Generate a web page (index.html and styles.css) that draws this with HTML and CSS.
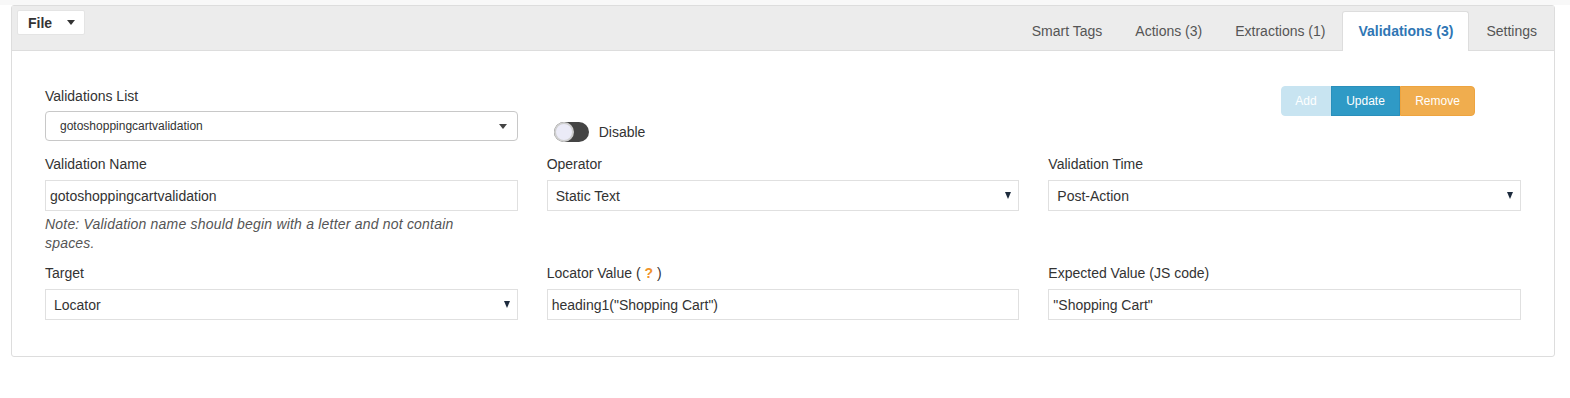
FILE: index.html
```html
<!DOCTYPE html>
<html>
<head>
    <title>Validations</title>
    <link rel="stylesheet" href="styles.css">
</head>
<body>
    <div class="top-strip"></div>
    <div class="panel">
        <div class="panel-head">
            <button class="file-btn">File <span class="caret"></span></button>
            <ul class="tabs">
                <li>Smart Tags</li>
                <li>Actions (3)</li>
                <li>Extractions (1)</li>
                <li class="active">Validations (3)</li>
                <li>Settings</li>
            </ul>
        </div>
        <div class="panel-body">
            <!-- list, toggle and buttons -->
            <div class="form-row">
                <div class="field">
                    <label>Validations List</label>
                    <div class="select select-small">
                        <span>gotoshoppingcartvalidation</span>
                        <span class="caret caret-grey"></span>
                    </div>
                </div>
                <div class="toggle-wrap">
                    <span class="toggle"><span class="knob"></span></span>
                    <span class="toggle-label">Disable</span>
                </div>
                <div class="btn-group">
                    <button class="btn btn-add">Add</button>
                    <button class="btn btn-update">Update</button>
                    <button class="btn btn-remove">Remove</button>
                </div>
            </div>

            <div class="form-row row-mid">
                <div class="field">
                    <label>Validation Name</label>
                    <input type="text" class="text-input" value="gotoshoppingcartvalidation">
                    <p class="note">Note: Validation name should begin with a letter and not contain spaces.</p>
                </div>
                <div class="field">
                    <label>Operator</label>
                    <div class="select">
                        <span>Static Text</span>
                        <span class="caret caret-dark"></span>
                    </div>
                </div>
                <div class="field">
                    <label>Validation Time</label>
                    <div class="select">
                        <span>Post-Action</span>
                        <span class="caret caret-dark"></span>
                    </div>
                </div>
            </div>

            <div class="form-row row-last">
                <div class="field">
                    <label>Target</label>
                    <div class="select">
                        <span>Locator</span>
                        <span class="caret caret-dark"></span>
                    </div>
                </div>
                <div class="field">
                    <label>Locator Value ( <span class="help">?</span> )</label>
                    <input type="text" class="text-input" value='heading1("Shopping Cart")'>
                </div>
                <div class="field">
                    <label>Expected Value (JS code)</label>
                    <input type="text" class="text-input" value='"Shopping Cart"'>
                </div>
            </div>
        </div>
    </div>
</body>
</html>
```

FILE: styles.css
```css
body {
    font-family: "Liberation Sans", Arial, sans-serif;
    font-size: 14px;
    color: #333;
    margin: 0;
    padding: 0;
    background-color: #fff;
}

.top-strip {
    height: 5px;
    background-color: #f8f8f8;
}

.panel {
    margin: 0 15px 0 11px;
    border: 1px solid #ddd;
    border-radius: 3px;
    background-color: #fff;
}

/* header with file menu and tabs */
.panel-head {
    display: flex;
    justify-content: space-between;
    align-items: flex-start;
    height: 40px;
    padding: 4px 0 0 5px;
    background-color: #ececec;
    border-bottom: 1px solid #ddd;
}

.file-btn {
    display: flex;
    align-items: center;
    height: 25px;
    width: 68px;
    padding: 0 0 0 10px;
    border: 1px solid #e4e4e4;
    border-radius: 2px;
    background-color: #fff;
    font-family: inherit;
    font-size: 14px;
    font-weight: bold;
    color: #333;
}

.file-btn .caret {
    margin-left: 15px;
    border-top: 5px solid #333;
    border-left: 4px solid transparent;
    border-right: 4px solid transparent;
}

.tabs {
    display: flex;
    list-style: none;
    margin: 0 1px -1px 0;
    padding: 0;
    align-self: flex-end;
}

.tabs li {
    padding: 9px 15px 10px;
    line-height: 20px;
    border: 1px solid transparent;
    border-bottom: none;
    border-radius: 3px 3px 0 0;
    color: #555;
    margin-left: 1px;
}

.tabs li.active {
    background-color: #fff;
    border-color: #ddd;
    color: #2f76b4;
    font-weight: bold;
}

/* form */
.panel-body {
    padding: 35px 33px 36px;
}

.form-row {
    display: grid;
    grid-template-columns: repeat(3, 1fr);
    column-gap: 29px;
    align-items: start;
}

.row-mid {
    margin-top: 12px;
}

.row-last {
    margin-top: 10px;
}

.field label {
    display: block;
    line-height: 20px;
    margin-bottom: 5px;
}

.row-mid .field label,
.row-last .field label {
    margin-bottom: 6px;
}

.help {
    color: #f0932b;
    font-weight: bold;
}

.select {
    display: flex;
    align-items: center;
    justify-content: space-between;
    height: 31px;
    padding: 0 8px;
    border: 1px solid #e0e0e0;
    box-sizing: border-box;
    background-color: #fff;
}

.select-small {
    height: 30px;
    padding: 0 10px 0 14px;
    border: 1px solid #c8c8c8;
    border-radius: 4px;
    font-size: 12px;
}

.caret-grey {
    border-top: 5px solid #444;
    border-left: 4px solid transparent;
    border-right: 4px solid transparent;
}

.caret-dark {
    margin-right: -1px;
    border-top: 7px solid #1d2b3d;
    border-left: 3px solid transparent;
    border-right: 3px solid transparent;
}

.text-input {
    display: block;
    width: 100%;
    height: 31px;
    padding: 0 4px;
    border: 1px solid #e0e0e0;
    box-sizing: border-box;
    font-family: inherit;
    font-size: 14px;
    color: #333;
    outline: none;
}

.note {
    margin: 4px 0 0;
    max-width: 415px;
    font-size: 14px;
    letter-spacing: 0.2px;
    line-height: 19px;
    font-style: italic;
    color: #555;
}

/* toggle */
.toggle-wrap {
    display: flex;
    align-items: center;
    margin: 36px 0 0 7px;
}

.toggle {
    display: inline-block;
    width: 35px;
    height: 20px;
    border-radius: 10px;
    background-color: #444;
}

.knob {
    display: block;
    width: 20px;
    height: 20px;
    box-sizing: border-box;
    border-radius: 50%;
    border: 2px solid #cfcfcf;
    background-color: #ebebf7;
}

.toggle-label {
    margin-left: 10px;
}

/* buttons */
.btn-group {
    display: flex;
    justify-self: end;
    margin-right: 46px;
}

.btn {
    height: 30px;
    padding: 0;
    border: 1px solid transparent;
    font-family: inherit;
    font-size: 12px;
    color: #fff;
    cursor: pointer;
}

.btn-add {
    width: 50px;
    background-color: #c8e4f1;
    border-color: #c8e4f1;
    border-radius: 4px 0 0 4px;
}

.btn-update {
    width: 69px;
    background-color: #2f9ac6;
    border-color: #2a8fbb;
}

.btn-remove {
    width: 75px;
    background-color: #f0ad4e;
    border-color: #eea43f;
    border-radius: 0 4px 4px 0;
}
```
